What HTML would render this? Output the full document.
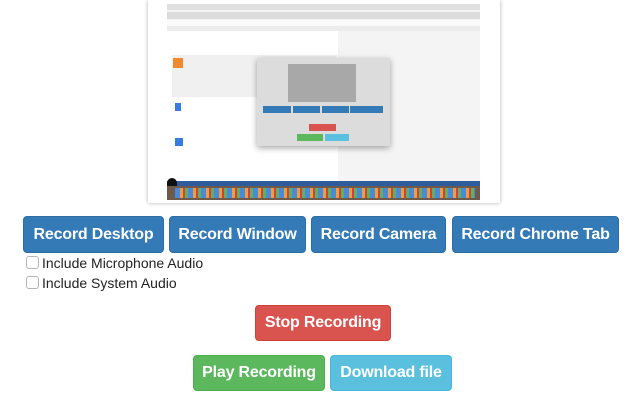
<!DOCTYPE html>
<html><head><meta charset="utf-8"><style>
*{margin:0;padding:0;box-sizing:border-box}
body{width:640px;height:400px;background:#fff;position:relative;overflow:hidden;font-family:"Liberation Sans",Arial,sans-serif}
.a{position:absolute}
.btn{position:absolute;color:#fff;font-weight:bold;font-size:16px;border-radius:4px;display:flex;align-items:center;justify-content:center;letter-spacing:-0.2px}
.b{background:#337ab7;border:1px solid #2e6da4}
.cb{position:absolute;left:26px;width:13px;height:13px;border:1px solid #b5b5b5;border-radius:3px;background:#fff}
.lbl{position:absolute;left:42px;font-size:14px;color:#222}
</style></head><body>
<div class="a" style="left:148px;top:0;width:352px;height:203px;background:#fff;box-shadow:0 0 4px rgba(0,0,0,.3)"></div>
<div class="a" style="left:167px;top:4px;width:313px;height:196px;background:#f4f4f4"></div>
<div class="a" style="left:167px;top:4px;width:313px;height:6px;background:#e0e0e0"></div>
<div class="a" style="left:167px;top:12px;width:313px;height:7px;background:#dcdcdc"></div>
<div class="a" style="left:167px;top:20px;width:313px;height:6px;background:#fafafa"></div>
<div class="a" style="left:167px;top:26px;width:313px;height:5px;background:#ececec"></div>
<div class="a" style="left:167px;top:31px;width:171px;height:150px;background:#fff"></div>
<div class="a" style="left:172px;top:55px;width:165px;height:42px;background:#f0f0f0"></div>
<div class="a" style="left:173px;top:58px;width:10px;height:10px;background:#f08a2c"></div>
<div class="a" style="left:175px;top:103px;width:6px;height:8px;background:#3a7be0"></div>
<div class="a" style="left:175px;top:138px;width:8px;height:8px;background:#3a7be0"></div>
<div class="a" style="left:257px;top:58px;width:133px;height:88px;background:#dcdcdc;box-shadow:0 2px 6px rgba(0,0,0,.35)"></div>
<div class="a" style="left:288px;top:64px;width:68px;height:38px;background:#a8a8a8"></div>
<div class="a" style="left:263px;top:106px;width:28px;height:7px;background:#337ab7"></div>
<div class="a" style="left:293px;top:106px;width:27px;height:7px;background:#337ab7"></div>
<div class="a" style="left:322px;top:106px;width:27px;height:7px;background:#337ab7"></div>
<div class="a" style="left:350px;top:106px;width:33px;height:7px;background:#337ab7"></div>
<div class="a" style="left:309px;top:124px;width:27px;height:7px;background:#d9534f"></div>
<div class="a" style="left:297px;top:134px;width:26px;height:7px;background:#5cb85c"></div>
<div class="a" style="left:325px;top:134px;width:24px;height:7px;background:#5bc0de"></div>
<div class="a" style="left:167px;top:181px;width:313px;height:5px;background:#2f5c9c"></div>
<div class="a" style="left:167px;top:186px;width:313px;height:14px;background:#6e5a4a"></div>
<div class="a" style="left:175px;top:188px;width:300px;height:10px;background:repeating-linear-gradient(90deg,#4a8ad8 0 5px,#e8a040 5px 8px,#d04040 8px 10px,#60b060 10px 13px)"></div>
<div class="a" style="left:167px;top:178px;width:10px;height:8px;background:#111;border-radius:5px 5px 0 0"></div>
<div class="btn b" style="left:23px;top:216px;width:141px;height:37px">Record Desktop</div>
<div class="btn b" style="left:169px;top:216px;width:137px;height:37px">Record Window</div>
<div class="btn b" style="left:311px;top:216px;width:135px;height:37px">Record Camera</div>
<div class="btn b" style="left:452px;top:216px;width:167px;height:37px">Record Chrome Tab</div>
<div class="cb" style="top:256px"></div><div class="lbl" style="top:255px">Include Microphone Audio</div>
<div class="cb" style="top:276px"></div><div class="lbl" style="top:275px">Include System Audio</div>
<div class="btn" style="left:255px;top:305px;width:136px;height:36px;background:#d9534f;border:1px solid #d43f3a">Stop Recording</div>
<div class="btn" style="left:193px;top:355px;width:132px;height:36px;background:#5cb85c;border:1px solid #4cae4c">Play Recording</div>
<div class="btn" style="left:330px;top:355px;width:122px;height:36px;background:#5bc0de;border:1px solid #46b8da">Download file</div>
</body></html>
